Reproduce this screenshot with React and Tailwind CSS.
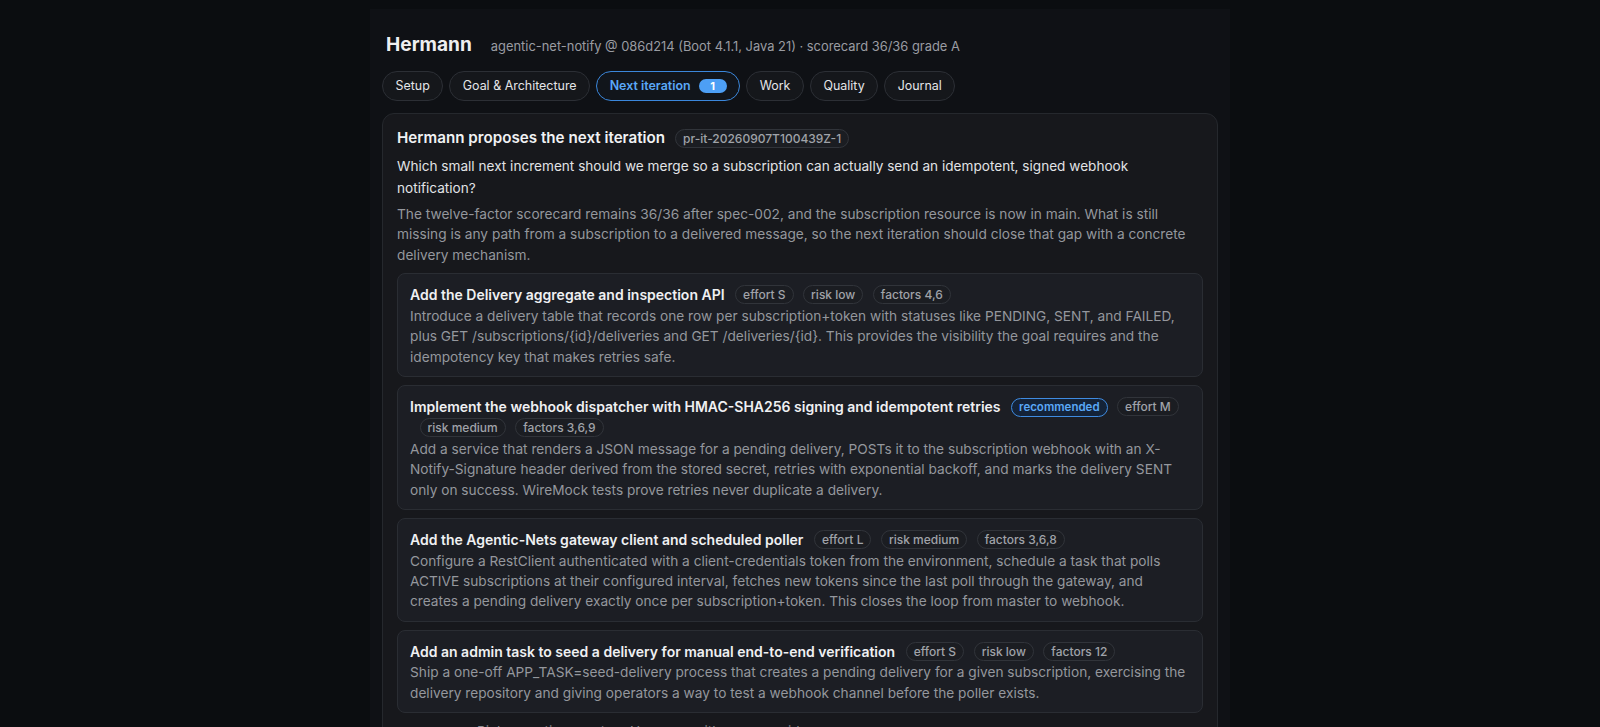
import { useState } from "react";

const tabs = [
  { id: "setup", label: "Setup" },
  { id: "goal", label: "Goal & Architecture" },
  { id: "next", label: "Next iteration", count: 1 },
  { id: "work", label: "Work" },
  { id: "quality", label: "Quality" },
  { id: "journal", label: "Journal" },
];

const options = [
  {
    title: "Add the Delivery aggregate and inspection API",
    effort: "S",
    risk: "low",
    factors: "4,6",
    body: "Introduce a delivery table that records one row per subscription+token with statuses like PENDING, SENT, and FAILED, plus GET /subscriptions/{id}/deliveries and GET /deliveries/{id}. This provides the visibility the goal requires and the idempotency key that makes retries safe.",
  },
  {
    title: "Implement the webhook dispatcher with HMAC-SHA256 signing and idempotent retries",
    recommended: true,
    effort: "M",
    risk: "medium",
    factors: "3,6,9",
    body: "Add a service that renders a JSON message for a pending delivery, POSTs it to the subscription webhook with an X-Notify-Signature header derived from the stored secret, retries with exponential backoff, and marks the delivery SENT only on success. WireMock tests prove retries never duplicate a delivery.",
  },
  {
    title: "Add the Agentic-Nets gateway client and scheduled poller",
    effort: "L",
    risk: "medium",
    factors: "3,6,8",
    body: "Configure a RestClient authenticated with a client-credentials token from the environment, schedule a task that polls ACTIVE subscriptions at their configured interval, fetches new tokens since the last poll through the gateway, and creates a pending delivery exactly once per subscription+token. This closes the loop from master to webhook.",
  },
  {
    title: "Add an admin task to seed a delivery for manual end-to-end verification",
    effort: "S",
    risk: "low",
    factors: "12",
    body: "Ship a one-off APP_TASK=seed-delivery process that creates a pending delivery for a given subscription, exercising the delivery repository and giving operators a way to test a webhook channel before the poller exists.",
  },
];

// small rounded tag used next to titles
function Pill({ children, blue }) {
  return (
    <span
      className={
        blue
          ? "inline-block align-[1px] ml-[9.5px] px-[7px] rounded-full border border-[#3f8be0] bg-[#142338] text-[#5aa8f7] text-[11.5px] leading-[17px] font-semibold"
          : "inline-block align-[1px] ml-[9.5px] px-[7px] rounded-full border border-[#31343a] bg-[#1b1d22] text-[#a0a3a9] text-[12px] leading-[17px] font-medium"
      }
    >
      {children}
    </span>
  );
}

export default function App() {
  const [active, setActive] = useState("next");

  return (
    <div
      className="min-h-screen bg-[#0b0d10] pt-[9px] text-[#e6e7ea]"
      style={{ fontFamily: "Inter, 'Noto Sans', 'Liberation Sans', sans-serif" }}
    >
      <div className="mx-auto w-[860px] min-h-[718px] bg-[#0f1115] px-3 pt-[21px]">

        {/* header */}
        <div className="flex items-baseline gap-[19px] pl-1">
          <h1 className="text-[19.1px] leading-7 font-bold text-[#eeeff1]">Hermann</h1>
          <span className="text-[12.9px] text-[#9a9ca2]">
            agentic-net-notify @ 086d214 (Boot 4.1.1, Java 21) · scorecard 36/36 grade A
          </span>
        </div>

        {/* tabs */}
        <div className="mt-[13px] flex gap-1.5">
          {tabs.map((t) => (
            <button
              key={t.id}
              onClick={() => setActive(t.id)}
              className={
                active === t.id
                  ? "h-[30px] px-[12.5px] rounded-full border border-[#3b87db] bg-[#11151b] text-[12.45px] font-semibold text-[#5aa8f7] flex items-center gap-2"
                  : "h-[30px] px-[12.5px] rounded-full border border-[#2c2f35] bg-[#15171b] text-[12.45px] text-[#e4e5e8] flex items-center"
              }
            >
              {t.label}
              {t.count && (
                <span className="inline-flex items-center justify-center w-[28px] h-[14px] rounded-full bg-[#4d9ff5] text-white text-[11px] font-bold">
                  {t.count}
                </span>
              )}
            </button>
          ))}
        </div>

        {/* proposal card */}
        <div className="mt-[12px] rounded-xl border border-[#25282d] bg-[#17181c] px-3.5 pt-3.5 pb-2">
          <div className="flex items-center gap-2.5">
            <h2 className="text-[15.2px] leading-5 font-semibold text-[#f0f1f3]">
              Hermann proposes the next iteration
            </h2>
            <span className="px-[7px] rounded-full border border-[#31343a] bg-[#1b1d22] text-[#a0a3a9] text-[12px] leading-[17px] font-medium">
              pr-it-20260907T100439Z-1
            </span>
          </div>

          <p className="mt-2 text-[13.6px] leading-[21.5px] text-[#e2e3e6]">
            Which small next increment should we merge so a subscription can actually send an idempotent, signed webhook notification?
          </p>
          <p className="mt-[5px] text-[13.7px] leading-[20.4px] text-[#94979d]">
            The twelve-factor scorecard remains 36/36 after spec-002, and the subscription resource is now in main. What is still missing is any path from a subscription to a delivered message, so the next iteration should close that gap with a concrete delivery mechanism.
          </p>

          <div className="mt-2 space-y-2">
            {options.map((o) => (
              <div key={o.title} className="rounded-lg border border-[#2a2d33] bg-[#1c1e24] px-3 pt-2.5 pb-[9px]">
                <div className="text-[14px] leading-[21.5px]">
                  <span className="font-semibold text-[#eff0f2] mr-px">{o.title}</span>
                  {o.recommended && <Pill blue>recommended</Pill>}
                  <Pill>effort {o.effort}</Pill>
                  <Pill>risk {o.risk}</Pill>
                  <Pill>factors {o.factors}</Pill>
                </div>
                <p className="text-[13.7px] leading-[20.4px] text-[#94979d]">{o.body}</p>
              </div>
            ))}
          </div>

          <p className="mt-2 pl-20 text-[13.7px] leading-5 text-[#8a8d93]">
            Pick an option, or steer Hermann with your own idea.
          </p>
        </div>
      </div>
    </div>
  );
}
